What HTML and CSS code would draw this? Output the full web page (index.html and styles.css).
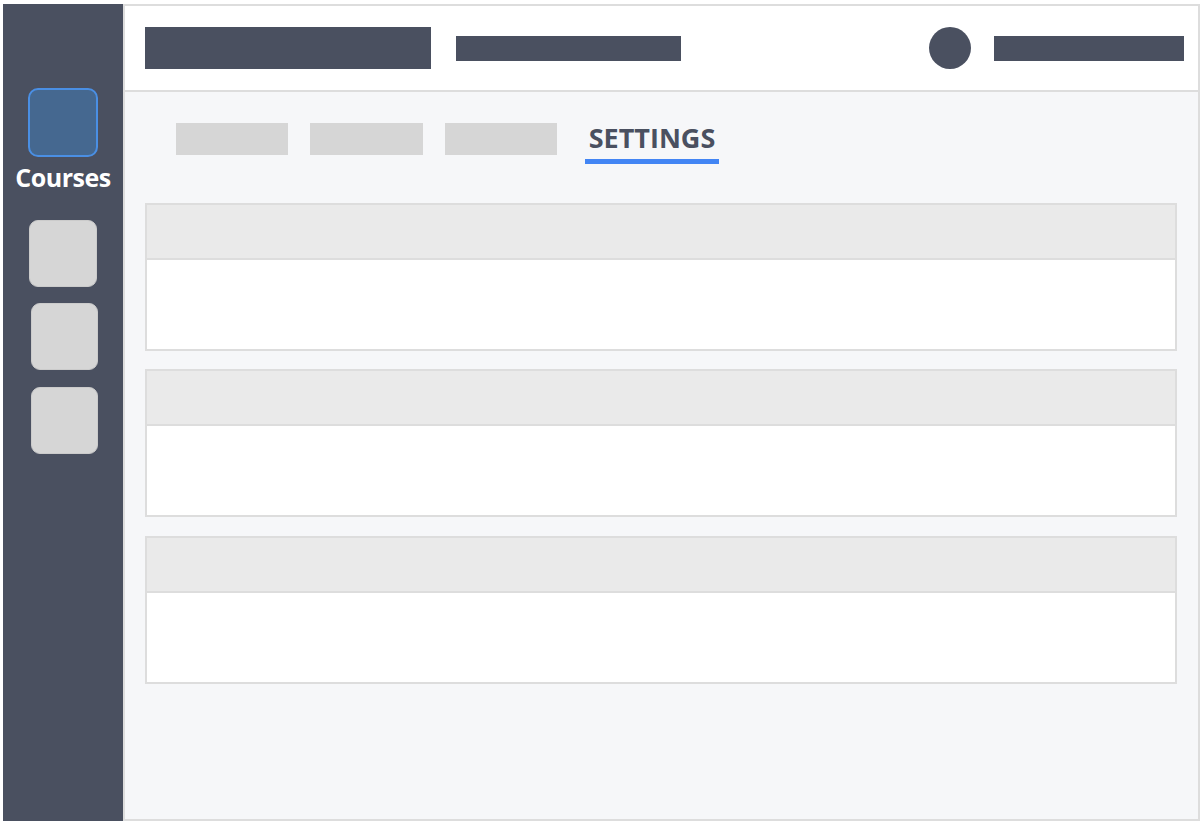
FILE: index.html
```html
<!DOCTYPE html>
<html lang="en">
<head>
<meta charset="utf-8">
<title>Courses – Settings</title>
<link rel="stylesheet" href="styles.css">
</head>
<body>
<div class="app">
  <aside class="sidebar">
    <div class="nav-icon nav-icon-active"></div>
    <div class="nav-label">Courses</div>
    <div class="nav-icon nav-icon-a"></div>
    <div class="nav-icon nav-icon-b"></div>
    <div class="nav-icon nav-icon-c"></div>
  </aside>
  <main class="main">
    <header class="topbar">
      <div class="ph ph-title"></div>
      <div class="ph ph-sub"></div>
      <div class="topbar-spacer"></div>
      <div class="avatar"></div>
      <div class="ph ph-user"></div>
    </header>
    <section class="content">
      <nav class="tabs">
        <div class="tab-ph tab-ph-1"></div>
        <div class="tab-ph tab-ph-2"></div>
        <div class="tab-ph tab-ph-3"></div>
        <div class="tab-active">SETTINGS</div>
      </nav>
      <div class="cards">
        <div class="card">
          <div class="card-head"></div>
          <div class="card-body"></div>
        </div>
        <div class="card">
          <div class="card-head"></div>
          <div class="card-body"></div>
        </div>
        <div class="card card-last">
          <div class="card-head"></div>
          <div class="card-body"></div>
        </div>
      </div>
    </section>
  </main>
</div>
</body>
</html>
```
FILE: styles.css
```css
* { box-sizing: border-box; }
html, body { margin: 0; padding: 0; background: #ffffff; }
body { font-family: "Open Sans", "Noto Sans", sans-serif; }

.app {
  display: flex;
  margin: 4px 0 0 3px;
  width: 1197px;
  height: 817px;
}

.sidebar {
  width: 120px;
  flex: none;
  background: #4a5060;
  display: flex;
  flex-direction: column;
  align-items: center;
  padding-top: 84px;
}

.nav-icon {
  width: 67px;
  height: 67px;
  border-radius: 9px;
  background: #d6d6d6;
  border: 1px solid #cbcbcb;
}
.nav-icon-active {
  width: 70px;
  height: 69px;
  border-radius: 10px;
  background: #456890;
  border: 2px solid #4a8fe4;
}
.nav-label {
  margin-top: 3px;
  color: #ffffff;
  font-weight: 700;
  font-size: 25px;
  line-height: 34px;
  letter-spacing: -0.5px;
}
.nav-icon-a { width: 68px; margin-top: 26px; }
.nav-icon-b { margin-top: 16px; margin-left: 3px; }
.nav-icon-c { margin-top: 17px; margin-left: 3px; }

.main {
  flex: 1;
  border: 2px solid #dddddd;
  background: #f6f7f9;
  display: flex;
  flex-direction: column;
}

.topbar {
  height: 86px;
  flex: none;
  background: #ffffff;
  border-bottom: 2px solid #dddddd;
  display: flex;
  align-items: center;
  padding: 0 14px 0 20px;
}
.ph { background: #4a5060; }
.ph-title { width: 286px; height: 42px; }
.ph-sub { width: 225px; height: 25px; margin-left: 25px; }
.topbar-spacer { flex: 1; }
.avatar {
  width: 42px;
  height: 42px;
  border-radius: 50%;
  background: #4a5060;
}
.ph-user { width: 190px; height: 25px; margin-left: 23px; }

.content {
  padding: 31px 21px 0 20px;
}

.tabs {
  display: flex;
  align-items: flex-start;
  padding-left: 31px;
}
.tab-ph {
  height: 32px;
  background: #d6d6d6;
}
.tab-ph-1 { width: 112px; }
.tab-ph-2 { width: 113px; margin-left: 22px; }
.tab-ph-3 { width: 112px; margin-left: 22px; }
.tab-active {
  margin-left: 28px;
  width: 134px;
  text-align: center;
  color: #4a5060;
  font-weight: 700;
  font-size: 27px;
  line-height: 30px;
  padding-bottom: 6px;
  border-bottom: 5px solid #4285f4;
}

.cards {
  margin-top: 39px;
  display: flex;
  flex-direction: column;
  gap: 18px;
}
.card {
  border: 2px solid #dddddd;
  background: #ffffff;
}
.card-last { margin-top: 1px; }
.card-head {
  height: 55px;
  background: #eaeaea;
  border-bottom: 2px solid #dddddd;
}
.card-body {
  height: 89px;
}
```
